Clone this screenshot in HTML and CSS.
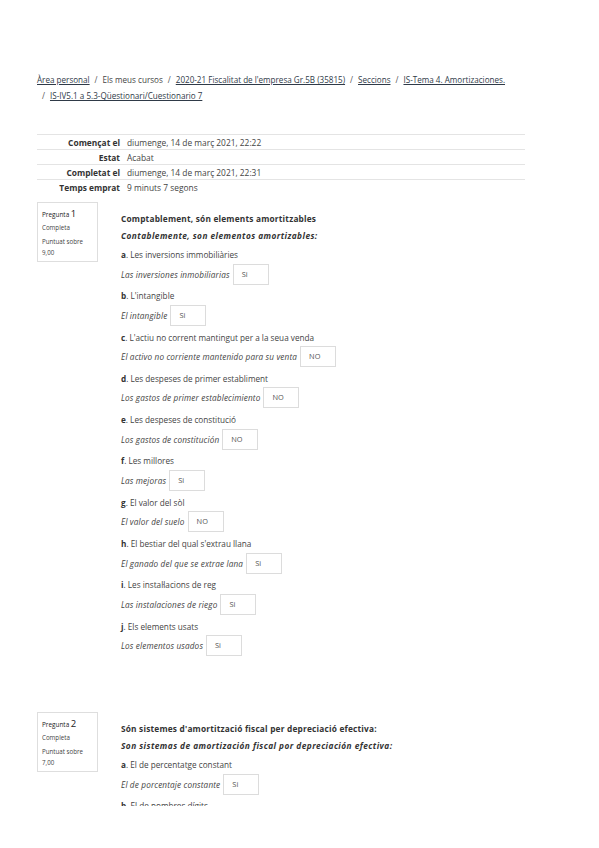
FILE: index.html
```html
<!DOCTYPE html>
<html lang="ca">
<head>
<meta charset="utf-8">
<title>Cuestionario 7</title>
<link rel="stylesheet" href="styles.css">
</head>
<body>
<div class="sheet">
<div class="page">
  <nav class="breadcrumb">
    <a href="#">Àrea personal</a><span class="sep">/</span><span>Els meus cursos</span><span class="sep">/</span><a href="#">2020-21 Fiscalitat de l'empresa Gr.5B (35815)</a><span class="sep">/</span><a href="#">Seccions</a><span class="sep">/</span><a href="#">IS-Tema 4. Amortizaciones.</a> <span class="seg"><span class="sep">/</span><a href="#">IS-IV5.1 a 5.3-Qüestionari/Cuestionario 7</a></span>
  </nav>

  <table class="summary">
    <tr><th>Començat el</th><td>diumenge, 14 de març 2021, 22:22</td></tr>
    <tr><th>Estat</th><td>Acabat</td></tr>
    <tr><th>Completat el</th><td>diumenge, 14 de març 2021, 22:31</td></tr>
    <tr class="last"><th>Temps emprat</th><td>9 minuts 7 segons</td></tr>
  </table>

  <div class="que">
    <div class="info">
      <div class="qno"><span class="ql">Pregunta</span> <span class="qn">1</span></div>
      <div class="state">Completa</div>
      <div class="grade">Puntuat sobre<br>9,00</div>
    </div>
    <div class="content">
      <p class="qtext">Comptablement, són elements amortitzables</p>
      <p class="qtext-es">Contablemente, son elementos amortizables:</p>
      <div class="item"><p class="lbl"><b>a</b>. Les inversions immobiliàries</p><p class="ans"><i>Las inversiones inmobiliarias</i><span class="sel">Si</span></p></div>
      <div class="item"><p class="lbl"><b>b</b>. L'intangible</p><p class="ans"><i>El intangible</i><span class="sel">Si</span></p></div>
      <div class="item"><p class="lbl"><b>c</b>. L'actiu no corrent mantingut per a la seua venda</p><p class="ans"><i>El activo no corriente mantenido para su venta</i><span class="sel">NO</span></p></div>
      <div class="item"><p class="lbl"><b>d</b>. Les despeses de primer establiment</p><p class="ans"><i>Los gastos de primer establecimiento</i><span class="sel">NO</span></p></div>
      <div class="item"><p class="lbl"><b>e</b>. Les despeses de constitució</p><p class="ans"><i>Los gastos de constitución</i><span class="sel">NO</span></p></div>
      <div class="item"><p class="lbl"><b>f</b>. Les millores</p><p class="ans"><i>Las mejoras</i><span class="sel">Si</span></p></div>
      <div class="item"><p class="lbl"><b>g</b>. El valor del sòl</p><p class="ans"><i>El valor del suelo</i><span class="sel">NO</span></p></div>
      <div class="item"><p class="lbl"><b>h</b>. El bestiar del qual s'extrau llana</p><p class="ans"><i>El ganado del que se extrae lana</i><span class="sel">Si</span></p></div>
      <div class="item"><p class="lbl"><b>i</b>. Les instal·lacions de reg</p><p class="ans"><i>Las instalaciones de riego</i><span class="sel">Si</span></p></div>
      <div class="item"><p class="lbl"><b>j</b>. Els elements usats</p><p class="ans"><i>Los elementos usados</i><span class="sel">Si</span></p></div>
    </div>
  </div>

  <div class="que q2">
    <div class="info">
      <div class="qno"><span class="ql">Pregunta</span> <span class="qn">2</span></div>
      <div class="state">Completa</div>
      <div class="grade">Puntuat sobre<br>7,00</div>
    </div>
    <div class="content">
      <p class="qtext">Són sistemes d'amortització fiscal per depreciació efectiva:</p>
      <p class="qtext-es">Son sistemas de amortización fiscal por depreciación efectiva:</p>
      <div class="item"><p class="lbl"><b>a</b>. El de percentatge constant</p><p class="ans"><i>El de porcentaje constante</i><span class="sel">Si</span></p></div>
      <div class="item"><p class="lbl"><b>b</b>. El de nombres dígits</p><p class="ans"><i>El de números dígitos</i><span class="sel">Si</span></p></div>
    </div>
  </div>
</div>
</div>
</body>
</html>
```

FILE: styles.css
```css
html, body {
  margin: 0;
  padding: 0;
  background: #fff;
}
body {
  font-family: "Open Sans", "DejaVu Sans", sans-serif;
  color: #3a3a3a;
  font-size: 8px;
}
.sheet {
  height: 806px;
  overflow: hidden;
}
.page {
  width: 488px;
  margin-left: 37px;
  padding-top: 72px;
}
p { margin: 0; }

.breadcrumb {
  font-size: 8.1px;
  line-height: 16px;
  color: #444;
}
.breadcrumb a {
  color: #2f3a48;
  text-decoration: underline;
}
.breadcrumb .sep {
  margin: 0 5px;
  color: #555;
}
.breadcrumb .seg {
  white-space: nowrap;
}

.summary {
  margin-top: 30px;
  width: 100%;
  border-collapse: collapse;
  font-size: 8.4px;
}
.summary th,
.summary td {
  border-top: 1px solid #e4e4e4;
  height: 14px;
  padding: 0;
  line-height: 13px;
  vertical-align: middle;
}
.summary th {
  width: 83px;
  text-align: right;
  font-weight: 700;
  color: #333;
  padding-right: 7px;
}
.summary td {
  color: #444;
}

.que {
  display: flex;
  align-items: flex-start;
  margin-top: 8px;
}
.que.q2 {
  margin-top: 56px;
}
.info {
  border: 1px solid #dedede;
  padding: 5px 0 0 4px;
  box-sizing: content-box;
  width: 55px;
  height: 53px;
  font-size: 6.2px;
  color: #444;
}
.qno {
  line-height: 11px;
  margin-bottom: 3px;
}
.qno .ql { font-size: 6.4px; color: #222; }
.qno .qn { font-size: 9.5px; color: #222; }
.state {
  line-height: 10px;
  margin-bottom: 4px;
}
.grade {
  line-height: 10.5px;
}
.content {
  margin-left: 23px;
  padding-top: 11px;
  flex: 1;
}
.qtext {
  font-weight: 700;
  font-size: 8.3px;
  line-height: 12px;
  color: #333;
  letter-spacing: 0.2px;
}
.qtext-es {
  font-weight: 700;
  font-style: italic;
  font-size: 8.3px;
  line-height: 12px;
  margin-top: 5px;
  color: #333;
  letter-spacing: 0.45px;
}
.item {
  margin-top: 5.8px;
}
.qtext-es + .item { margin-top: 7px; }
.lbl {
  line-height: 12.5px;
  font-size: 8.2px;
  color: #444;
}
.lbl b { color: #333; }
.ans {
  display: flex;
  align-items: center;
  margin-top: 2px;
  height: 21px;
  font-size: 8.2px;
  color: #444;
}
.ans i {
  margin-right: 3px;
  letter-spacing: 0.15px;
}
.sel {
  display: inline-block;
  box-sizing: border-box;
  width: 36px;
  height: 21px;
  line-height: 19px;
  border: 1px solid #dcdcdc;
  padding-left: 8px;
  font-size: 7.4px;
  color: #555;
  letter-spacing: 0;
}
```
